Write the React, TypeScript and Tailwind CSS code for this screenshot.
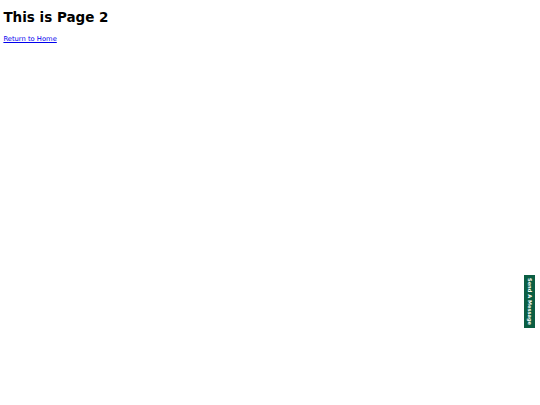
export default function App() {
  return (
    <div className="min-h-[405px] bg-white px-[3.4px] text-[6.75px] text-black [font-family:'DejaVu_Sans',sans-serif]">
      <h1 className="m-0 pt-[10px] text-[13.5px] font-bold leading-[1.17]">This is Page 2</h1>
      <p className="mt-[8.5px]">
        <a href="#" className="text-[#0000ee] underline">Return to Home</a>
      </p>
      <div className="fixed right-[5px] top-[275px] flex h-[53px] w-[11px] items-center justify-center bg-[#0b5e43]">
        <span className="whitespace-nowrap text-[5.1px] font-bold leading-none text-white [writing-mode:vertical-rl]">Send A Message</span>
      </div>
    </div>
  );
}
